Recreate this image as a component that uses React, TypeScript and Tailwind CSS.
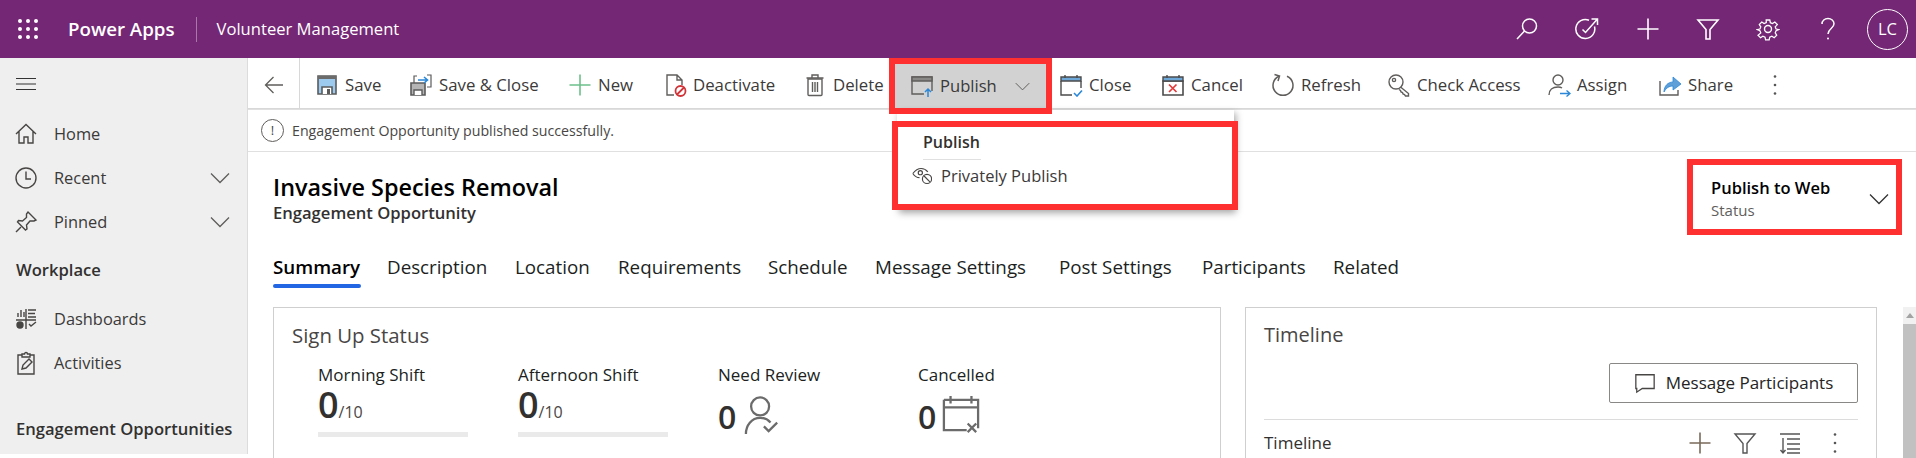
import type { ReactNode } from 'react'

const GRAY = '#605e5c'
const BLUE = '#2b88d8'

function Ico({ children, className = 'h-[24px] w-[24px]', color = GRAY }: { children: ReactNode; className?: string; color?: string }) {
  return (
    <svg viewBox="0 0 24 24" fill="none" stroke={color} strokeWidth="1.4" className={`shrink-0 ${className}`}>
      {children}
    </svg>
  )
}

const SaveIcon = () => (
  <Ico>
    <path d="M3 3h18v18H3z" fill="#9cc9ee" stroke="#5b5b5b" strokeWidth="1.6" />
    <path d="M3 3h18v3H3z" fill="#6b6b6b" stroke="none" />
    <path d="M7 21v-7h10v7" fill="#fff" stroke="#5b5b5b" strokeWidth="1.6" />
    <path d="M12 16h3v5h-3z" fill="#5b5b5b" stroke="none" />
  </Ico>
)
const SaveCloseIcon = () => (
  <Ico>
    <path d="M2 10h14v12H2z" fill="#b5b5b5" stroke="#5b5b5b" strokeWidth="1.6" />
    <path d="M5 22v-5h8v5" fill="#fff" stroke="#5b5b5b" strokeWidth="1.4" />
    <path d="M5 10V3h3M18 2h4v12h-4" stroke="#5b5b5b" strokeWidth="1.2" />
    <path d="M9 7h9M15 4l3.500 3-3.500 3" stroke={BLUE} strokeWidth="1.6" />
  </Ico>
)
const PlusIcon = ({ color = '#6cc08b' }: { color?: string }) => (
  <Ico color={color}>
    <path d="M12 1.500v21M1.500 12h21" strokeWidth="1.6" />
  </Ico>
)
const DeactivateIcon = () => (
  <Ico>
    <path d="M11 22H4V2h10l5 5v5M14 2v5h5" />
    <circle cx="17.500" cy="18" r="5" fill="#fff" stroke="#d13438" strokeWidth="1.8" />
    <path d="M14 21.500l7-7" stroke="#d13438" strokeWidth="1.8" />
  </Ico>
)
const DeleteIcon = () => (
  <Ico>
    <path d="M5 6h14v15.500a1 1 0 0 1-1 1H6a1 1 0 0 1-1-1z" />
    <path d="M3.500 5h17M9 4.500V2h6v2.500M9.500 9v10M12 9v10M14.500 9v10" />
  </Ico>
)
const PublishIcon = () => (
  <Ico>
    <path d="M14 20H2V3h20v14" />
    <path d="M2 3h20v4H2z" fill="#8a8886" stroke="#605e5c" />
    <path d="M18 23v-8M15 18l3-3 3 3" stroke={BLUE} strokeWidth="1.5" />
  </Ico>
)
const CalendarBase = () => (
  <>
    <path d="M2 4h20v4H2z" fill="#6ea8d9" stroke="#4b4b4b" />
    <path d="M6 2v3M18 2v3" stroke="#4b4b4b" />
  </>
)
const CloseIcon = () => (
  <Ico>
    <CalendarBase />
    <path d="M2 8v14h11M22 8v7" stroke="#4b4b4b" />
    <path d="M15 20l3 3 5-5.500" stroke={BLUE} strokeWidth="1.6" />
  </Ico>
)
const CancelIcon = () => (
  <Ico>
    <path d="M2 8h20v14H2z" fill="#fff" stroke="#4b4b4b" strokeWidth="1.6" />
    <CalendarBase />
    <path d="M8 11.500l7.500 7.500M15.500 11.500L8 19" stroke="#e23a3a" strokeWidth="1.7" />
  </Ico>
)
const RefreshIcon = () => (
  <Ico>
    <path d="M8 3.200A10 10 0 1 0 16 3.200" strokeWidth="1.5" />
    <path d="M3.500 1.500L8.500 3l-1.500 5" strokeWidth="1.5" />
  </Ico>
)
const KeyIcon = () => (
  <Ico>
    <circle cx="9" cy="9" r="7" />
    <circle cx="7" cy="7" r="1.600" />
    <path d="M13.500 14l8 6.500v2.500h-3l-1-1.500-1.500-.5-.5-1.500-1.500-.5-.5-1.500-1.500-1" />
  </Ico>
)
const AssignIcon = () => (
  <Ico>
    <circle cx="11" cy="7" r="5" />
    <path d="M2 22c0-5 3.500-8 9-8 1.500 0 3 .3 4 1" />
    <path d="M13 20.500h10M19.500 17.500l3.500 3-3.500 3" stroke={BLUE} strokeWidth="1.4" />
  </Ico>
)
const ShareIcon = () => (
  <Ico>
    <path d="M2 8v14h18v-5" />
    <path d="M6 19c0-6 4-10 9-10V4l8 7-8 6v-4c-4 0-7 2-9 6z" fill="#5f9fd8" stroke={BLUE} strokeWidth="0.8" />
  </Ico>
)
const MoreIcon = ({ className = 'h-[24px] w-[24px]' }: { className?: string }) => (
  <svg viewBox="0 0 24 24" fill="#555" className={className}>
    <circle cx="12" cy="3.500" r="1.300" />
    <circle cx="12" cy="12" r="1.300" />
    <circle cx="12" cy="20.500" r="1.300" />
  </svg>
)
const Chevron = ({ className, color = GRAY }: { className: string; color?: string }) => (
  <svg viewBox="0 0 20 12" fill="none" stroke={color} strokeWidth="1.300" className={`shrink-0 ${className}`}>
    <path d="M1 1.500l9 9 9-9" />
  </svg>
)

const commands = [
  { label: 'Save', icon: <SaveIcon />, w: 'w-[94px]' },
  { label: 'Save & Close', icon: <SaveCloseIcon />, w: 'w-[159px]' },
  { label: 'New', icon: <PlusIcon />, w: 'w-[95px]' },
  { label: 'Deactivate', icon: <DeactivateIcon />, w: 'w-[140px]' },
  { label: 'Delete', icon: <DeleteIcon />, w: 'w-[92px]' },
]

const commandsAfter = [
  { label: 'Close', icon: <CloseIcon />, w: 'w-[102px]' },
  { label: 'Cancel', icon: <CancelIcon />, w: 'w-[110px]' },
  { label: 'Refresh', icon: <RefreshIcon />, w: 'w-[116px]' },
  { label: 'Check Access', icon: <KeyIcon />, w: 'w-[160px]' },
  { label: 'Assign', icon: <AssignIcon />, w: 'w-[111px]' },
  { label: 'Share', icon: <ShareIcon />, w: 'w-[105px]' },
]

const tabs = [
  { label: 'Description', w: 'w-[128px]' },
  { label: 'Location', w: 'w-[103px]' },
  { label: 'Requirements', w: 'w-[150px]' },
  { label: 'Schedule', w: 'w-[107px]' },
  { label: 'Message Settings', w: 'w-[184px]' },
  { label: 'Post Settings', w: 'w-[143px]' },
  { label: 'Participants', w: 'w-[131px]' },
  { label: 'Related', w: 'w-[100px]' },
]

function Command({ label, icon, w }: { label: string; icon: ReactNode; w: string }) {
  return (
    <div className={`flex shrink-0 items-center gap-[6px] ${w}`}>
      {icon}
      <span className="whitespace-nowrap text-[16.800px] text-[#3b3a39]">{label}</span>
    </div>
  )
}

function NavItem({ label, icon, open }: { label: string; icon: ReactNode; open?: boolean }) {
  return (
    <div className="flex h-[44px] items-center pl-[14px] pr-[17px]">
      {icon}
      <span className="ml-[16px] flex-1 text-[16.400px] text-[#3b3a39]">{label}</span>
      {open && <Chevron className="h-[12px] w-[20px]" />}
    </div>
  )
}

function Stat({ label, total }: { label: string; total: string }) {
  return (
    <div className="w-[200px] shrink-0">
      <div className="whitespace-nowrap text-[17px] leading-[22px] text-[#201f1e]">{label}</div>
      <div className="mt-[1px] flex h-[36px] items-end leading-none text-[#323130]">
        <span className="text-[36px] font-semibold leading-[36px]">0</span>
        <span className="mb-[2px] text-[16px] leading-[18px] text-[#484644]">{total}</span>
      </div>
      <div className="mt-[9px] h-[5px] w-[150px] bg-[#eaeaea]" />
    </div>
  )
}

export default function App() {
  return (
    <div className="relative h-screen w-full overflow-hidden bg-white font-['Open_Sans',sans-serif]">
      {/* top bar */}
      <header className="flex h-[58px] items-center bg-[#742774] text-white">
        <div className="ml-[18px] grid w-[20px] grid-cols-3 gap-[4px]">
          {Array.from({ length: 9 }).map((_, i) => (
            <span key={i} className="h-[4px] w-[4px] rounded-full bg-white" />
          ))}
        </div>
        <span className="ml-[30px] whitespace-nowrap text-[18.700px] font-semibold">Power Apps</span>
        <span className="ml-[21px] h-[25px] w-px bg-[#a878a8]" />
        <span className="ml-[20px] whitespace-nowrap text-[16.600px]">Volunteer Management</span>
        <div className="ml-auto flex items-center">
          <svg viewBox="0 0 24 24" fill="none" stroke="#fff" strokeWidth="1.500" className="h-[24px] w-[24px]">
            <circle cx="14.500" cy="9" r="7" />
            <path d="M9.500 14L2 22" />
          </svg>
          <svg viewBox="0 0 24 24" fill="none" stroke="#fff" strokeWidth="1.500" className="ml-[36px] h-[24px] w-[24px]">
            <path d="M19.500 9.500A9.500 9.500 0 1 1 14 3.200" />
            <path d="M7.500 12.500l3 3L22 2.500M16.500 2H22.500V8" />
          </svg>
          <svg viewBox="0 0 24 24" fill="none" stroke="#fff" strokeWidth="1.600" className="ml-[37px] h-[24px] w-[24px]">
            <path d="M12 1.500v21M1.500 12h21" />
          </svg>
          <svg viewBox="0 0 24 24" fill="none" stroke="#fff" strokeWidth="1.600" className="ml-[36px] h-[24px] w-[24px]">
            <path d="M2 3h20l-8 9.500V22h-4v-9.500z" />
          </svg>
          <svg viewBox="0 0 24 24" fill="none" stroke="#fff" strokeWidth="1.400" className="ml-[36px] h-[24px] w-[24px]">
            <circle cx="12" cy="12" r="3.500" />
            <path d="M10 2h4l.6 3 2.400 1 2.600-1.700 2.800 2.800L20 9.700l1 2.300 3 .6v0l-3 1.400-1 2.300 1.700 2.600-2.800 2.800-2.600-1.700-2.400 1-.6 3h-4l-.6-3-2.400-1-2.600 1.700-2.800-2.800L4 16.300l-1-2.300-3-1.400v0l3-.6 1-2.300-1.700-2.600 2.800-2.800L7.700 6l2.400-1z" transform="translate(1.200 1.200) scale(.9)" />
          </svg>
          <svg viewBox="0 0 24 24" fill="none" stroke="#fff" strokeWidth="1.500" className="ml-[36px] h-[24px] w-[24px]">
            <path d="M6 7c0-3.300 2.700-5.500 6-5.500s6 2.200 6 5.300c0 4.700-6 4.700-6 10.200" />
            <circle cx="12" cy="21.500" r="1" fill="#fff" stroke="none" />
          </svg>
          <div className="ml-[27px] mr-[8px] flex h-[41px] w-[41px] items-center justify-center rounded-full border border-white text-[16.500px]">
            LC
          </div>
        </div>
      </header>

      <div className="flex">
        {/* sidebar */}
        <aside className="h-[396px] w-[248px] shrink-0 border-r border-[#dcdcdc] bg-[#efefef]">
          <div className="mb-[2px] flex h-[52px] items-center pl-[16px]">
            <svg viewBox="0 0 20 14" fill="none" stroke="#333" strokeWidth="1.100" className="h-[14px] w-[20px]">
              <path d="M0 1.500h20M0 7h20M0 12.500h20" />
            </svg>
          </div>
          <NavItem
            label="Home"
            icon={
              <Ico className="h-[24px] w-[24px]" color="#484644">
                <path d="M2 12L12 2.500 22 12M5 9.500V21h5v-6h4v6h5V9.500" />
              </Ico>
            }
          />
          <NavItem
            label="Recent"
            open
            icon={
              <Ico color="#484644">
                <circle cx="12" cy="12" r="10" />
                <path d="M12 5.500V13h5" />
              </Ico>
            }
          />
          <NavItem
            label="Pinned"
            open
            icon={
              <Ico color="#484644">
                <path d="M14 2l8 8-2 1-4 0-3.500 4 .5 4-1.500 1-8-8 1-1.500 4 .5 4-3.500V4z" />
                <path d="M7 17l-5 5" />
              </Ico>
            }
          />
          <div className="mt-[14px] pl-[16px] text-[16.600px] font-semibold leading-[24px] text-[#323130]">Workplace</div>
          <div className="mt-[15px]">
            <NavItem
              label="Dashboards"
              icon={
                <Ico color="#484644">
                  <path d="M2 13h20M12 2v20M4 10V6M7 10V3M10 10V5M14 3h8M14 6.500h7M14 10h8M15 17l2 2 5-4" />
                  <circle cx="6" cy="18" r="3" fill="#484644" />
                </Ico>
              }
            />
            <NavItem
              label="Activities"
              icon={
                <Ico color="#484644">
                  <path d="M8 4H4v19h16V4h-4" />
                  <path d="M8 6V3h2.500a1.500 1.500 0 0 1 3 0H16v3z" />
                  <path d="M8 18l1-4 6-6 3 3-6 6z" />
                </Ico>
              }
            />
          </div>
          <div className="mt-[32px] whitespace-nowrap pl-[16px] text-[16.600px] font-semibold leading-[24px] text-[#323130]">
            Engagement Opportunities
          </div>
        </aside>

        <main className="min-w-0 flex-1">
          {/* command bar */}
          <div className="flex h-[52px]">
            <div className="flex w-[820px] flex-1 border-b border-[#e0e0e0]">
              <div className="flex h-full flex-1 border-b border-[#d8d8d8]">
                <div className="flex w-[52px] shrink-0 items-center justify-center border-r border-[#d8d8d8] pt-[3px]">
                  <svg viewBox="0 0 20 18" fill="none" stroke={GRAY} strokeWidth="1.300" className="h-[18px] w-[20px]">
                    <path d="M19 9H1.500M9.500 1l-8 8 8 8" />
                  </svg>
                </div>
                <div className="flex items-center pl-[15px] pt-[3px]">
                  {commands.map((c) => (
                    <Command key={c.label} {...c} />
                  ))}
                  <div className="mt-[3px] flex h-[44px] w-[164px] shrink-0 items-center">
                    <div className="flex h-full w-[151px] items-center bg-[#d2d2d2] pl-[15px]">
                      <PublishIcon />
                      <span className="ml-[6px] text-[16.600px] text-[#3b3a39]">Publish</span>
                      <Chevron className="ml-[18px] h-[9px] w-[15px]" />
                    </div>
                  </div>
                  {commandsAfter.map((c) => (
                    <Command key={c.label} {...c} />
                  ))}
                  <MoreIcon />
                </div>
              </div>
            </div>
          </div>

          {/* notification */}
          <div className="flex h-[42px] items-center border-b border-[#e0e0e0] pl-[13px]">
            <div className="flex h-[23px] w-[23px] items-center justify-center rounded-full border border-[#605e5c] text-[13px] text-[#484644]">
              !
            </div>
            <span className="ml-[8px] text-[14.200px] text-[#484644]">Engagement Opportunity published successfully.</span>
          </div>

          {/* record header */}
          <div className="flex h-[88px] items-start justify-between pl-[25px]">
            <div>
              <h1 className="mt-[20px] text-[23.400px] font-semibold leading-[30px] text-black">Invasive Species Removal</h1>
              <div className="text-[16.600px] font-semibold leading-[22px] text-[#323130]">Engagement Opportunity</div>
            </div>
            <div className="mr-[31px] mt-[24px] flex w-[174px] items-center justify-between">
              <div>
                <div className="whitespace-nowrap text-[16.500px] font-semibold leading-[24px] text-black">Publish to Web</div>
                <div className="text-[15px] leading-[20px] text-[#605e5c]">Status</div>
              </div>
              <Chevron className="mr-[-4px] mt-[2px] h-[12px] w-[20px]" color="#333" />
            </div>
          </div>

          {/* tabs */}
          <div className="flex h-[67px] items-start pl-[25px] text-[18.800px] text-[#201f1e]">
            <div className="mt-[14px] w-[114px] shrink-0">
              <div className="font-semibold leading-[26px] text-black">Summary</div>
              <div className="mt-[4px] h-[4px] w-[88px] rounded-sm bg-[#2266e3]" />
            </div>
            {tabs.map((t) => (
              <div key={t.label} className={`mt-[14px] shrink-0 whitespace-nowrap leading-[26px] ${t.w}`}>
                {t.label}
              </div>
            ))}
          </div>

          {/* cards */}
          <div className="flex items-start pl-[25px]">
            <section className="h-[200px] w-[948px] shrink-0 border border-[#cfcfcf] pl-[18px] pt-[14px]">
              <div className="text-[20.400px] leading-[26px] text-[#484644]">Sign Up Status</div>
              <div className="mt-[16px] flex pl-[26px]">
                <Stat label="Morning Shift" total="/10" />
                <Stat label="Afternoon Shift" total="/10" />
                <div className="w-[200px] shrink-0">
                  <div className="text-[17px] leading-[22px] text-[#201f1e]">Need Review</div>
                  <div className="mt-[10px] flex h-[38px] text-[#323130]">
                    <span className="self-end text-[32px] font-semibold leading-[34px]">0</span>
                    <svg viewBox="0 0 38 40" fill="none" stroke="#6b6b6b" strokeWidth="2.400" className="ml-[8px] h-[38px] w-[36px]">
                      <circle cx="17" cy="11" r="9.500" />
                      <path d="M2 40c0-9 6-17 15-17 4 0 8 1.500 11 5M21 32l5 5 9-9" />
                    </svg>
                  </div>
                </div>
                <div className="w-[200px] shrink-0">
                  <div className="text-[17px] leading-[22px] text-[#201f1e]">Cancelled</div>
                  <div className="mt-[10px] flex h-[38px] text-[#323130]">
                    <span className="self-end text-[32px] font-semibold leading-[34px]">0</span>
                    <svg viewBox="0 0 38 40" fill="none" stroke="#6b6b6b" strokeWidth="2.400" className="ml-[6px] h-[38px] w-[38px]">
                      <path d="M1 4h36v30M1 4v32h24M1 12h36M8 0v8M30 0v8M26 29l9 9M35 29l-9 9" />
                    </svg>
                  </div>
                </div>
              </div>
            </section>

            <section className="ml-[24px] h-[200px] w-[632px] shrink-0 border border-[#cfcfcf] px-[18px] pt-[14px]">
              <div className="text-[20px] leading-[26px] text-[#484644]">Timeline</div>
              <div className="mt-[15px] flex justify-end">
                <div className="flex h-[40px] w-[249px] items-center justify-center rounded-[2px] border border-[#8a8886] text-[17px] text-[#252423]">
                  <svg viewBox="0 0 24 24" fill="none" stroke="#484644" strokeWidth="1.400" className="mr-[10px] h-[22px] w-[22px]">
                    <path d="M2 3h20v15H9l-6 4v-4H2z" />
                  </svg>
                  Message Participants
                </div>
              </div>
              <div className="mt-[16px] border-t border-[#dcdcdc]" />
              <div className="mt-[11px] flex items-center">
                <span className="flex-1 text-[17px] leading-[24px] text-[#323130]">Timeline</span>
                <PlusIcon color="#7a6a5a" />
                <span className="ml-[21px]">
                  <Ico color="#555">
                    <path d="M2 3h20l-8 9.500V22h-4v-9.500z" />
                  </Ico>
                </span>
                <span className="ml-[21px]">
                  <Ico color="#555">
                    <path d="M2 3h20M9 8h13M9 13h13M9 18h13M9 22h13M5 7v15M2.500 19l2.500 3 2.500-3" />
                  </Ico>
                </span>
                <span className="ml-[21px] mr-[11px]">
                  <MoreIcon />
                </span>
              </div>
            </section>

            {/* scrollbar */}
            <div className="ml-auto h-[151px] w-[13px] shrink-0 bg-[#f1f1f1]">
              <div className="flex h-[17px] items-center justify-center">
                <span className="h-0 w-0 border-x-[4px] border-b-[5px] border-x-transparent border-b-[#a3a3a3]" />
              </div>
              <div className="h-[134px] bg-[#c1c1c1]" />
            </div>
          </div>
        </main>
      </div>

      {/* publish flyout */}
      <div className="absolute left-[897px] top-[110px] h-[100px] w-[337px] bg-white shadow-[2px_3px_7px_rgba(0,0,0,0.35)]">
        <div className="ml-[26px] mt-[20px] w-[58px] whitespace-nowrap border-b border-[#e0e0e0] pb-[5px] text-[16px] font-semibold leading-[24px] text-[#323130]">
          Publish
        </div>
        <div className="mt-[3px] flex h-[26px] items-center pl-[15px]">
          <svg viewBox="0 0 24 20" fill="none" stroke="#484644" strokeWidth="1.400" className="h-[18px] w-[20px]">
            <path d="M1 7c3-4 7-6 10-6s6 1.500 8 4M1 7c2 3 5 5 8 5" />
            <circle cx="10" cy="6" r="2.500" />
            <circle cx="18" cy="13.500" r="5.500" fill="#fff" />
            <path d="M14.500 10l7 7" />
          </svg>
          <span className="ml-[9px] whitespace-nowrap text-[16.500px] text-[#3b3a39]">Privately Publish</span>
        </div>
      </div>

      {/* annotation boxes */}
      <div className="pointer-events-none absolute left-[889px] top-[58px] h-[56px] w-[163px] border-[6px] border-[#ff3030]" />
      <div className="pointer-events-none absolute left-[892px] top-[121px] h-[89px] w-[346px] border-[6px] border-[#ff3030]" />
      <div className="pointer-events-none absolute left-[1687px] top-[159px] h-[76px] w-[215px] border-[6px] border-[#ff3030]" />
    </div>
  )
}
